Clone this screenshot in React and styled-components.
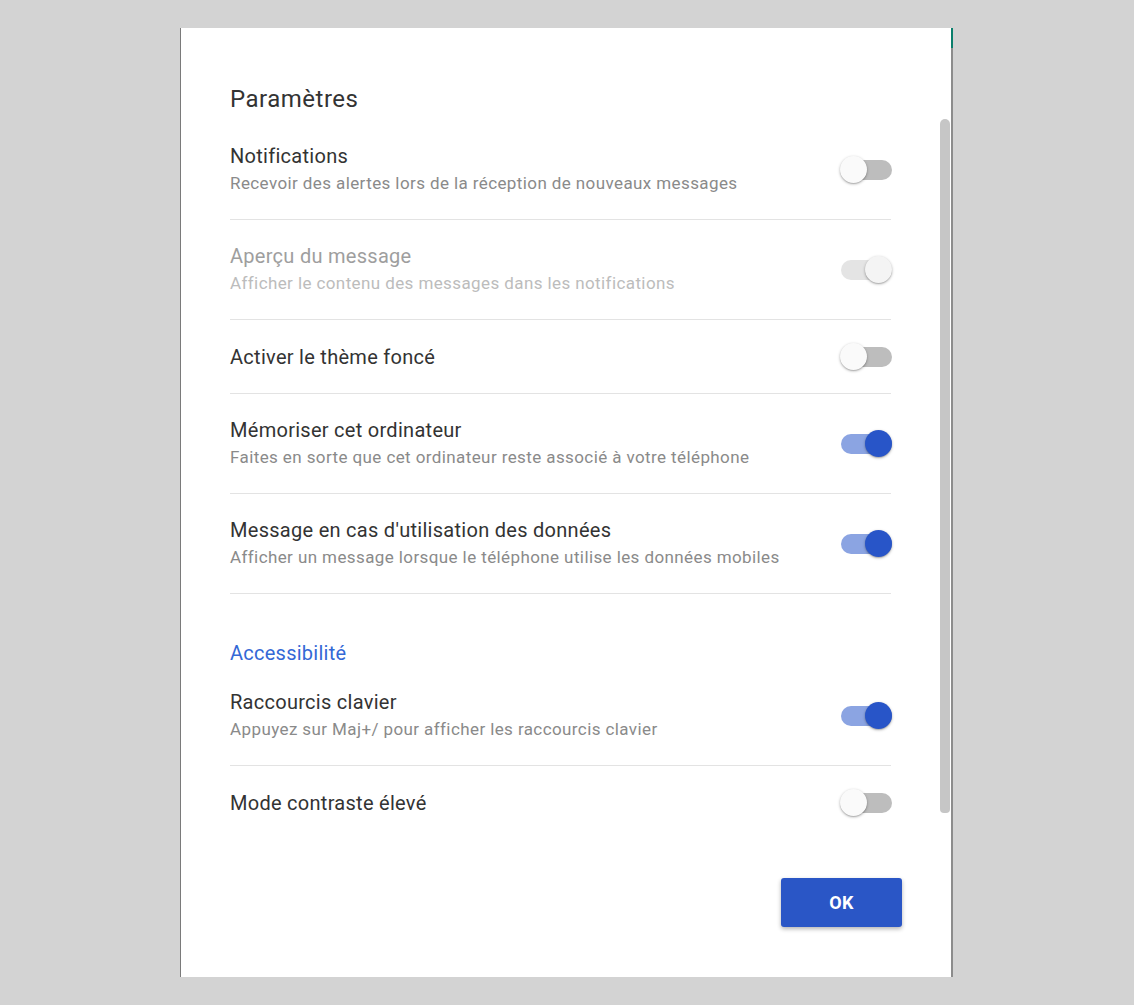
import React from "react";
import styled, { createGlobalStyle } from "styled-components";

const Global = createGlobalStyle`
  html, body { margin: 0; padding: 0; background: #d3d3d3; }
  body { font-family: Roboto, "Noto Sans", Arial, sans-serif; -webkit-font-smoothing: antialiased; }
  #root { min-height: 1005px; }
`;

const Page = styled.div`
  padding-top: 28px;
  padding-left: 180px;
  height: 1005px;
  box-sizing: border-box;
`;

const Dialog = styled.div`
  position: relative;
  background: #ffffff;
  border-left: 1px solid #7a7a7a;
  border-right: 2px solid #8c8c8c;
  padding: 55px 49px 50px 49px;
  box-sizing: border-box;
  width: 773px;
  display: flex;
  flex-direction: column;
`;

const TealMark = styled.div`
  position: absolute;
  top: 0;
  right: -2px;
  width: 2px;
  height: 20px;
  background: #0b7f6c;
`;

const ScrollThumb = styled.div`
  position: absolute;
  top: 91px;
  right: 1px;
  width: 10px;
  height: 694px;
  border-radius: 5px 5px 4px 4px;
  background: #c6c6c6;
`;

const Title = styled.h2`
  margin: 0 0 5px;
  font-size: 24px;
  line-height: 32px;
  font-weight: 400;
  letter-spacing: 0.5px;
  color: #333333;
`;

const List = styled.div`
  margin-right: 11px;
  display: flex;
  flex-direction: column;
`;

const Row = styled.div`
  display: flex;
  align-items: center;
  justify-content: space-between;
  padding: 23px 0 22px;
  border-bottom: ${(p) => (p.$last ? "none" : "1px solid #e3e3e3")};
`;

const Texts = styled.div`
  display: flex;
  flex-direction: column;
`;

const RowTitle = styled.div`
  font-size: 20px;
  line-height: 27px;
  letter-spacing: 0.28px;
  color: ${(p) => (p.$disabled ? "#9e9e9e" : "#333333")};
`;

const RowSub = styled.div`
  font-size: 17px;
  line-height: 27px;
  letter-spacing: 0.4px;
  color: ${(p) => (p.$disabled ? "#bcbcbc" : "#8a8a8a")};
`;

const Section = styled.div`
  padding-top: 46px;
  font-size: 20px;
  line-height: 26px;
  letter-spacing: 0.25px;
  color: #3468d6;
`;

const Switch = styled.div`
  position: relative;
  width: 52px;
  height: 28px;
  margin-right: -1px;
  flex: none;
`;

const Track = styled.div`
  position: absolute;
  left: 1px;
  right: 0;
  top: 4px;
  height: 20px;
  border-radius: 10px;
  background: ${(p) =>
    p.$disabled ? "#e4e4e4" : p.$on ? "#8ba4e2" : "#bdbdbd"};
`;

const Thumb = styled.div`
  position: absolute;
  top: 0;
  ${(p) => (p.$on ? "right: 0;" : "left: 0;")}
  width: 27px;
  height: 27px;
  border-radius: 50%;
  background: ${(p) => (p.$disabled ? "#f4f4f4" : p.$on ? "#2855c8" : "#fafafa")};
  box-shadow: 0 1px 3px rgba(0, 0, 0, 0.3), 0 1px 1px rgba(0, 0, 0, 0.12);
`;

const Footer = styled.div`
  display: flex;
  justify-content: flex-end;
  margin-top: 39px;
`;

const OkButton = styled.button`
  width: 121px;
  height: 49px;
  border: none;
  border-radius: 3px;
  background: #2a56c6;
  color: #ffffff;
  font-family: Roboto, Arial, sans-serif;
  font-weight: 700;
  font-size: 18px;
  letter-spacing: 0.3px;
  box-shadow: 0 2px 4px rgba(0, 0, 0, 0.3);
  cursor: pointer;
`;

const Toggle = ({ on, disabled }) => (
  <Switch>
    <Track $on={on} $disabled={disabled} />
    <Thumb $on={on} $disabled={disabled} />
  </Switch>
);

const general = [
  {
    title: "Notifications",
    sub: "Recevoir des alertes lors de la réception de nouveaux messages",
    on: false,
  },
  {
    title: "Aperçu du message",
    sub: "Afficher le contenu des messages dans les notifications",
    on: true,
    disabled: true,
  },
  { title: "Activer le thème foncé", on: false },
  {
    title: "Mémoriser cet ordinateur",
    sub: "Faites en sorte que cet ordinateur reste associé à votre téléphone",
    on: true,
  },
  {
    title: "Message en cas d'utilisation des données",
    sub: "Afficher un message lorsque le téléphone utilise les données mobiles",
    on: true,
  },
];

const access = [
  {
    title: "Raccourcis clavier",
    sub: "Appuyez sur Maj+/ pour afficher les raccourcis clavier",
    on: true,
  },
  { title: "Mode contraste élevé", on: false, last: true },
];

const SettingRow = ({ item }) => (
  <Row $last={item.last}>
    <Texts>
      <RowTitle $disabled={item.disabled}>{item.title}</RowTitle>
      {item.sub && <RowSub $disabled={item.disabled}>{item.sub}</RowSub>}
    </Texts>
    <Toggle on={item.on} disabled={item.disabled} />
  </Row>
);

export default function App() {
  return (
    <>
      <Global />
      <Page>
        <Dialog>
          <TealMark />
          <ScrollThumb />
          <Title>Paramètres</Title>
          <List>
            {general.map((it) => (
              <SettingRow key={it.title} item={it} />
            ))}
            <Section>Accessibilité</Section>
            {access.map((it) => (
              <SettingRow key={it.title} item={it} />
            ))}
          </List>
          <Footer>
            <OkButton>OK</OkButton>
          </Footer>
        </Dialog>
      </Page>
    </>
  );
}
